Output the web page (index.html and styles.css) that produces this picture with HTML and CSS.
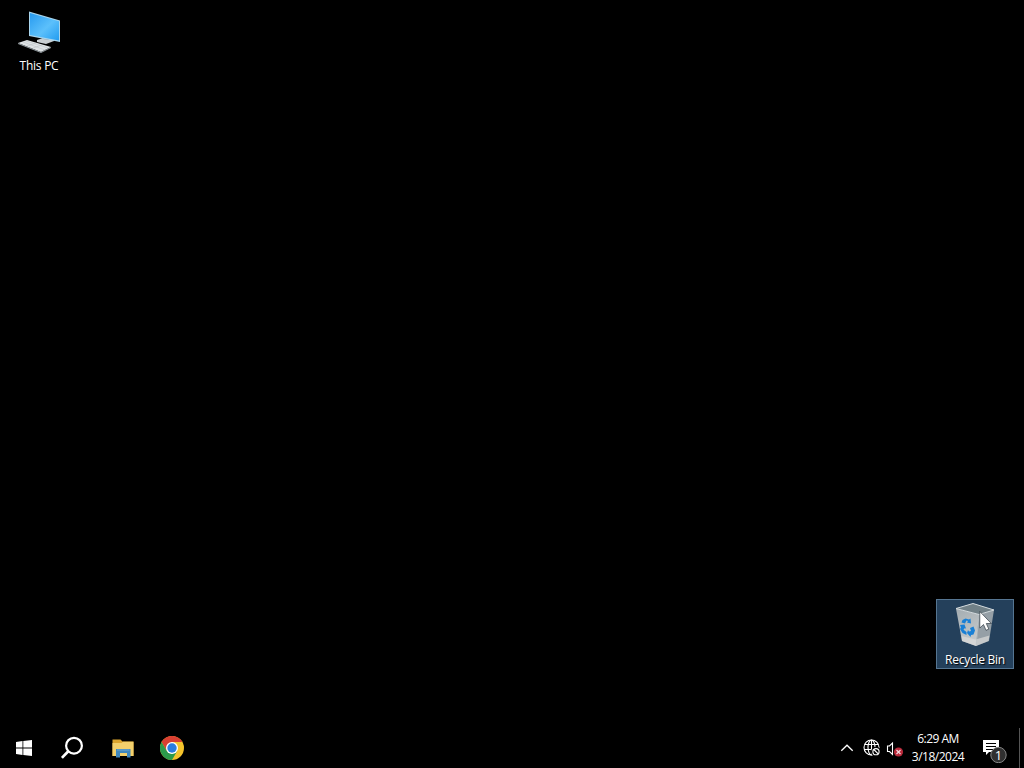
FILE: index.html
```html
<!DOCTYPE html>
<html lang="en">
<head>
<meta charset="utf-8">
<title>Desktop</title>
<link rel="stylesheet" href="styles.css">
</head>
<body>
<main class="desktop">
  <div class="shortcut shortcut-pc">
    <svg class="shortcut-icon" width="48" height="48" viewBox="0 0 48 48">
      <defs><linearGradient id="screen" x1="0" y1="0" x2="1" y2="1"><stop offset="0" stop-color="#279af0"/><stop offset=".55" stop-color="#5cc0fb"/><stop offset="1" stop-color="#229cf1"/></linearGradient></defs>
      <path d="M22 32l9-3 9 2-1 2-8 3-9-2z" fill="#c9ced1"/>
      <path d="M28 28l6 1v3l-6-1z" fill="#8c979f"/>
      <path d="M14 3.500l31 9V34l-31-6z" fill="#a9d5ed"/>
      <path d="M15 5l29 8.300v19.200L15 27z" fill="url(#screen)"/>
      <path d="M3 35l9-3 24 7-10 5z" fill="#dfe3e5"/>
      <path d="M3 35l23 9 10-5v1l-10 5L3 36z" fill="#929ba1"/>
      <path d="M8 34l22 8M11 33l22 7M12 38l9-3M18 40l9-3" stroke="#b9bfc3" stroke-width=".5"/>
    </svg>
    <span class="shortcut-label label-pc">This PC</span>
  </div>
  <div class="shortcut shortcut-bin">
    <svg class="shortcut-icon" width="48" height="48" viewBox="0 0 48 48">
      <defs><linearGradient id="bin" x1="0" y1="0" x2=".4" y2="1"><stop offset="0" stop-color="#a3acb1"/><stop offset="1" stop-color="#c5c9cb"/></linearGradient></defs>
      <path d="M5 8.500l23 6-3 31.500-14-5z" fill="url(#bin)"/>
      <path d="M28 14.500l15-4.500-5 31-13 5z" fill="#959fa6"/>
      <path d="M5 8.500l17-5 21 6.500-15 4.500z" fill="#718087" stroke="#d5dbde" stroke-width="1"/>
      <path d="M10.500 36l14 3.500 14-4-1 5.500-12.500 5-14-5z" fill="#dcdcda" opacity=".7"/>
      <path d="M28 14.500L25 46" stroke="#c3c9cc" stroke-width=".8"/>
      <g fill="#1980d6"><path d="M11.500 20l3-1.500 3.500 1 1.500-1 .5 5-4-1 1-1.500-1.500-.5-1.500 3-3.500-1z"/><path d="M9 25l4.500-.5 1.500 4-1.500-.3-1 1.500 3 2.300v3l-4-2-2.500-4 1-1.500z"/><path d="M17 30l1 1.500 2-.5-1-3 3.500-1.500 1.500 4-1.500 4-2.500.5-.5 2-3.500-4z"/></g>
    </svg>
    <span class="shortcut-label label-bin">Recycle Bin</span>
  </div>
  <svg class="cursor" width="14" height="21" viewBox="0 0 14 21"><path d="M.8.500v16.500l3.700-3.500 2.500 5.800 2.800-1.200-2.500-5.600h5z" fill="#fff" stroke="#17242e" stroke-width=".6"/></svg>
</main>
<footer class="taskbar">
  <nav class="apps">
    <button class="app" aria-label="Start"><svg width="16" height="16" viewBox="0 0 16 16" fill="#fff"><path d="M0 2l6.500-.9v6.500H0zM7.300 1L16 0v7.600H7.300zM0 8.400h6.500v6.500L0 14zM7.300 8.400H16V16l-8.700-1.100z"/></svg></button>
    <button class="app" aria-label="Search"><svg width="24" height="24" viewBox="0 0 24 24" fill="none" stroke="#fff"><circle cx="14" cy="9.700" r="7.900" stroke-width="2.200"/><path d="M8.300 15.300L1.900 21.900" stroke-width="2.700"/></svg></button>
    <button class="app app-files" aria-label="File Explorer"><svg width="22" height="19" viewBox="0 0 22 19"><path d="M.5.500h8l2 2h11V17H.5z" fill="#dca52e"/><path d="M.5 4h9l1.500-1.300h10.500V17H.5z" fill="#f3d06c"/><path d="M4 10h14.500v8.500H15V14H8v4.500H4z" fill="#3f87bd"/><path d="M5 10h12.500v2H5z" fill="#5798c7"/></svg></button>
    <button class="app app-chrome" aria-label="Chrome"><svg width="24" height="24" viewBox="0 0 24 24"><circle cx="12" cy="12" r="12" fill="#f5c32c"/><path d="M1.600 6A12 12 0 0 1 22.400 6H12L6.800 15z" fill="#d93f32"/><path d="M1.600 6A12 12 0 0 0 12 24l5.200-9-5.200 3-5.200-3z" fill="#2c9a4b"/><circle cx="12" cy="12" r="6" fill="#fff"/><circle cx="12" cy="12" r="4.700" fill="#2b7de0"/></svg></button>
  </nav>
  <div class="tray">
    <svg class="chevron" width="14" height="8" viewBox="0 0 14 8"><path d="M1.300 6.800L7 1.200l5.700 5.600" fill="none" stroke="#fff" stroke-width="1.300"/></svg>
    <svg class="network" width="18" height="18" viewBox="0 0 18 18" fill="none" stroke="#fff" stroke-width="1.100"><circle cx="8.500" cy="8.500" r="7.500"/><ellipse cx="8.500" cy="8.500" rx="3.500" ry="7.500"/><path d="M1.800 5.500h13.400M1 10.500h15M8.500 1v15"/><circle cx="13" cy="12.700" r="4.500" fill="#000" stroke="#000"/><circle cx="13" cy="12.700" r="3.100"/><path d="M10.800 10.500l4.400 4.400"/></svg>
    <svg class="sound" width="18" height="16" viewBox="0 0 18 16"><path d="M1.500 5H3.500L6.500 2v11.500l-3-3h-2z" fill="none" stroke="#fff" stroke-width="1.100"/><circle cx="12.500" cy="11" r="4.600" fill="#b92a3b"/><path d="M10.500 9l4 4m0-4l-4 4" stroke="#f5dce0" stroke-width="1.200"/></svg>
    <div class="clock"><span class="time">6:29 AM</span><span class="date">3/18/2024</span></div>
    <svg class="notifications" width="26" height="26" viewBox="0 0 26 26"><path d="M1 3h16v12H7l-3 3v-3H1z" fill="#fff"/><path d="M4 6.500h10M4 9.500h10M4 12.500h7" stroke="#000"/><circle cx="16.500" cy="18" r="7.700" fill="#303030" stroke="#858585"/><text class="badge-count" x="16.500" y="22.500" text-anchor="middle">1</text></svg>
    <div class="show-desktop"></div>
  </div>
</footer>
</body>
</html>
```
FILE: styles.css
```css
* { box-sizing: border-box; }
body {
  margin: 0;
  height: 768px;
  display: flex;
  flex-direction: column;
  overflow: hidden;
  background: #000;
  color: #fff;
  font: 12px/18px "Open Sans", "Noto Sans", sans-serif;
}
.desktop { flex: 1; position: relative; }
.shortcut {
  position: absolute;
  width: 78px;
  height: 70px;
  display: flex;
  flex-direction: column;
  align-items: center;
}
.shortcut-pc { left: 0; top: 5px; padding-top: 3px; }
.shortcut-bin {
  left: 936px;
  top: 599px;
  border: 1px solid #557591;
  background: #24405b;
}
.shortcut-icon { flex: none; }
.shortcut-label {
  white-space: nowrap;
  text-shadow: 1px 1px 1px #000;
}
.label-pc { margin-top: 1px; letter-spacing: -.25px; }
.label-bin { margin-top: 3px; letter-spacing: -.25px; }
.cursor { position: absolute; left: 979px; top: 611px; }
.taskbar {
  height: 40px;
  display: flex;
  justify-content: space-between;
}
.apps, .tray { display: flex; align-items: center; }
.app {
  width: 48px;
  height: 40px;
  padding: 0;
  border: 0;
  background: none;
  display: flex;
  align-items: center;
  justify-content: center;
}
.app-files { margin-left: 3px; }
.app-chrome { margin-left: 1px; }
.network { margin: 0 0 0 9px; }
.sound { margin: 1px 0 0 5px; }
.clock {
  width: 62px;
  margin: 0 13px 0 3px;
  display: flex;
  flex-direction: column;
  align-items: center;
  letter-spacing: -.5px;
  white-space: nowrap;
}
.notifications { margin-top: 4px; }
.badge-count { fill: #fff; font-size: 13px; }
.show-desktop {
  width: 5px;
  height: 40px;
  margin-left: 11px;
  border-left: 1px solid #555;
}
```
